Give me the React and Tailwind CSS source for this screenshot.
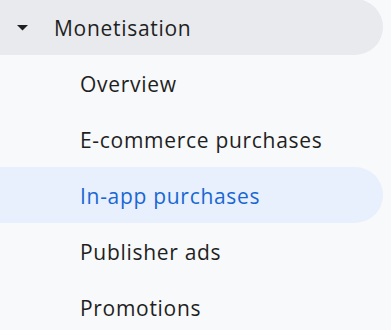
import React from "react";

const items = [
  { label: "Overview" },
  { label: "E-commerce purchases" },
  { label: "In-app purchases", active: true },
  { label: "Publisher ads" },
  { label: "Promotions" },
];

export default function App() {
  return (
    <div className="min-h-screen w-[391px] bg-[#f8f9fa] font-['Open_Sans',sans-serif] overflow-hidden">
      <div className="pr-2 -mt-px">
        <div className="flex h-14 items-center rounded-r-full bg-[#e8eaed] text-[#1f1f1f]">
          <div className="flex w-[54px] justify-center pr-[10px] pt-px">
            <svg width="11" height="6" viewBox="0 0 11 6">
              <path d="M0 0h11L5.5 5.5z" fill="#1f1f1f" />
            </svg>
          </div>
          <span className="pt-1 text-[21px] font-medium tracking-[0.7px]">Monetisation</span>
        </div>
        {items.map((item) => (
          <div
            key={item.label}
            className={
              item.active
                ? "flex h-14 items-center rounded-r-full bg-[#e8f0fe] pl-20 text-[#1967d2]"
                : "flex h-14 items-center pl-20 text-[#1f1f1f]"
            }
          >
            <span className="pt-1 text-[21px] font-medium tracking-[0.7px]">{item.label}</span>
          </div>
        ))}
      </div>
    </div>
  );
}
